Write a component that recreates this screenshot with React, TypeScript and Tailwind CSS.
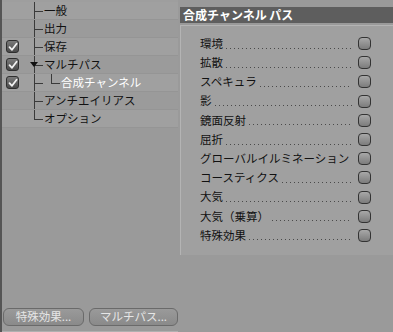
import React from "react";

const font = { fontFamily: '"Noto Sans CJK JP", "Noto Sans", sans-serif' };

function Check({ on }: { on: boolean }) {
  if (!on) return <div className="w-[13px] h-[13px]" />;
  return (
    <div className="w-[13px] h-[13px] rounded-[3px] border border-[#2e2e2e] bg-gradient-to-b from-[#7a7a7a] to-[#4a4a4a] flex items-center justify-center">
      <svg width="10" height="10" viewBox="0 0 10 10">
        <path d="M1.5 5.2 L4 7.8 L8.6 1.8" fill="none" stroke="#f2f2f2" strokeWidth="1.8" strokeLinecap="round" strokeLinejoin="round" />
      </svg>
    </div>
  );
}

function Connector({ last }: { last?: boolean }) {
  return (
    <div className="relative w-[9px] h-full shrink-0">
      <div className={`absolute left-0 top-0 w-px bg-[#3a3a3a] ${last ? "h-1/2" : "h-full"}`} />
      <div className="absolute left-0 top-1/2 h-px w-[9px] bg-[#3a3a3a]" />
    </div>
  );
}

type Item = { label: string; check: boolean; sub?: boolean; last?: boolean; arrow?: boolean; selected?: boolean };

const items: Item[] = [
  { label: "一般", check: false },
  { label: "出力", check: false },
  { label: "保存", check: true },
  { label: "マルチパス", check: true, arrow: true },
  { label: "合成チャンネル", check: true, sub: true, selected: true },
  { label: "アンチエイリアス", check: false },
  { label: "オプション", check: false, last: true },
];

const passes = [
  "環境",
  "拡散",
  "スペキュラ",
  "影",
  "鏡面反射",
  "屈折",
  "グローバルイルミネーション",
  "コースティクス",
  "大気",
  "大気（乗算）",
  "特殊効果",
];

export default function App() {
  return (
    <div className="w-[393px] h-[332px] bg-[#9a9a9a] flex overflow-hidden text-[11.5px] text-[#111]" style={font}>
      {/* Left panel */}
      <div className="w-[179px] h-full flex flex-col border-l-2 border-[#555]">
        <div className="flex flex-col pt-[2px] bg-[#9e9e9e]">
          {items.map((it, i) => (
            <div
              key={i}
              className={`h-[18px] flex items-stretch border-b border-[#959595] ${i % 2 === 0 ? "bg-[#a0a0a0]" : "bg-[#9b9b9b]"}`}
            >
              <div className="w-[32px] shrink-0 flex items-center pl-[4px]">
                <Check on={it.check} />
              </div>
              {it.sub ? (
                <>
                  <Connector />
                  <div className="w-[8px] shrink-0" />
                  <Connector last />
                  <span className="pl-[1px] self-center text-white leading-none">{it.label}</span>
                </>
              ) : (
                <>
                  <div className="relative">
                    <Connector last={it.last} />
                    {it.arrow && (
                      <svg className="absolute left-[-4px] top-[6px]" width="8" height="6" viewBox="0 0 8 6">
                        <path d="M0 0 L8 0 L4 5 Z" fill="#111" />
                      </svg>
                    )}
                  </div>
                  <span className="pl-[1px] self-center leading-none">{it.label}</span>
                </>
              )}
            </div>
          ))}
        </div>
        <div className="flex-1" />
        <div className="flex gap-[5px] pl-[1px] pb-[5px] border-b border-[#b0b0b0]">
          <button className="w-[81px] h-[18px] rounded-[6px] border border-[#6a6a6a] bg-gradient-to-b from-[#9a9a9a] to-[#8a8a8a] text-[#e6e6e6] text-[11.5px] leading-none" style={font}>
            特殊効果...
          </button>
          <button className="w-[89px] h-[18px] rounded-[6px] border border-[#6a6a6a] bg-gradient-to-b from-[#9a9a9a] to-[#8a8a8a] text-[#e6e6e6] text-[11.5px] leading-none" style={font}>
            マルチパス...
          </button>
        </div>
      </div>
      {/* Divider */}
      <div className="w-px h-full bg-[#6c6c6c]" />
      <div className="w-px h-full bg-[#a8a8a8]" />
      {/* Right panel */}
      <div className="flex-1 pt-[7px] pl-[2px] flex flex-col">
        <div className="h-[16px] bg-[#5e5e5e] flex items-center pl-[3px] text-white font-bold text-[12px] leading-none">
          合成チャンネル パス
        </div>
        <div className="mt-[2px] h-[230px] bg-[#a0a0a0] border-t border-l border-[#b4b4b4] pt-[8px] flex flex-col">
          {passes.map((p, i) => (
            <div key={i} className="h-[19.2px] flex items-center pl-[19px] pr-[23px]">
              <span className="leading-none whitespace-nowrap">{p}</span>
              <div className="flex-1 ml-[3px] mr-[4px] mt-[9px] h-px bg-[linear-gradient(to_right,#4a4a4a_1px,transparent_1px)] bg-[length:4px_1px]" />
              <div className="w-[13px] h-[13px] ml-[2px] rounded-[4px] border border-[#333] bg-gradient-to-b from-[#a8a8a8] to-[#7c7c7c]" />
            </div>
          ))}
        </div>
      </div>
    </div>
  );
}
